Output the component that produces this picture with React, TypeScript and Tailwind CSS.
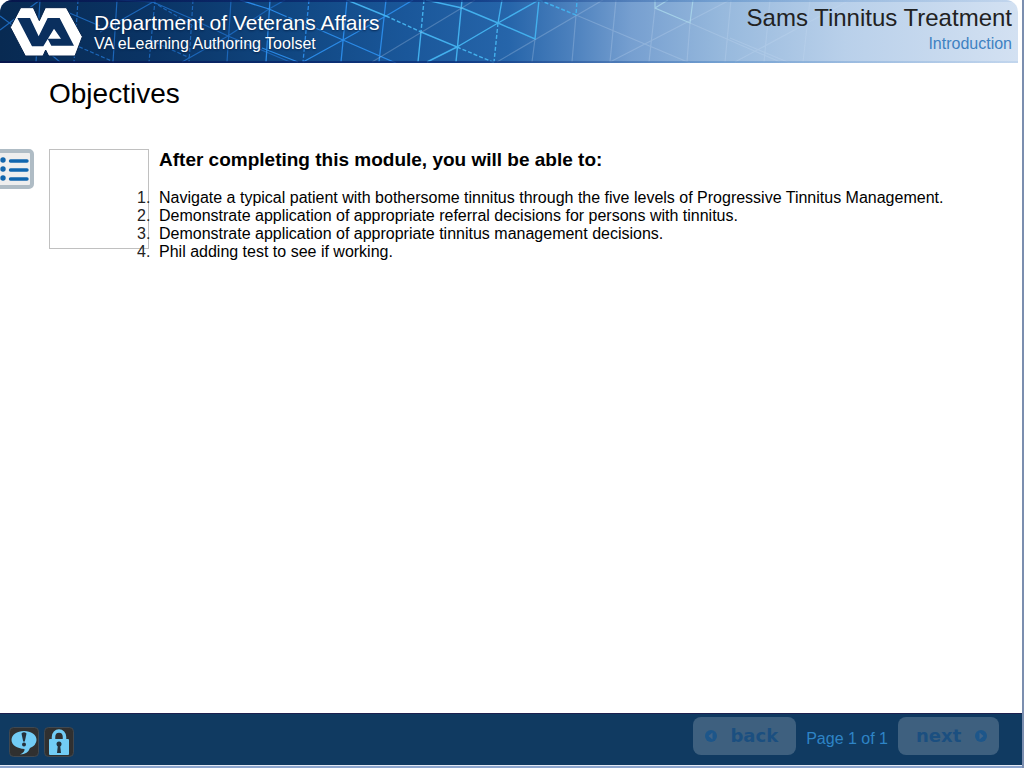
import React from "react";

function HeaderPattern() {
  return (
    <svg
      className="absolute inset-0 h-full w-full"
      viewBox="0 0 1018 63"
      preserveAspectRatio="none"
      fill="none"
      aria-hidden="true"
    >
      <defs>
        <linearGradient id="sky" x1="0" y1="0" x2="1" y2="0">
          <stop offset="0" stopColor="#082a52" />
          <stop offset="0.15" stopColor="#0a3465" />
          <stop offset="0.28" stopColor="#104680" />
          <stop offset="0.4" stopColor="#1a579a" />
          <stop offset="0.5" stopColor="#2665aa" />
          <stop offset="0.56" stopColor="#4b80bd" />
          <stop offset="0.62" stopColor="#769fd0" />
          <stop offset="0.71" stopColor="#97b9dd" />
          <stop offset="0.83" stopColor="#b9d0ea" />
          <stop offset="1" stopColor="#d3e1f2" />
        </linearGradient>
        <linearGradient id="edge" gradientUnits="userSpaceOnUse" x1="0" y1="0" x2="1018" y2="0">
          <stop offset="0" stopColor="#06114a" stopOpacity="0.8" />
          <stop offset="0.45" stopColor="#0a2c78" stopOpacity="0.7" />
          <stop offset="0.7" stopColor="#4f86c4" stopOpacity="0.5" />
          <stop offset="1" stopColor="#a9c5e6" stopOpacity="0.4" />
        </linearGradient>
      </defs>
      <rect width="1018" height="63" fill="url(#sky)" />
      <g stroke="#1c66b8" strokeWidth="1.2">
        <path d="M40 0L36 62M117 0L113 62M231 0L227 62M0 16L42 47L60 62M60 9L100 26M118 0L153 2L190 18L228 36L290 62M100 32L153 2M182 62L228 36L269 9L285 0M0 30L40 0" />
        <path d="M78 0L74 62M155 0L149 62M193 0L189 62M68 42L114 62M150 40L190 58M153 2L200 30" strokeDasharray="4 2" />
      </g>
      <g stroke="#2b8ae6" strokeWidth="1.3">
        <path d="M270 0L266 62M347 0L341 62M386 0L379 62M240 0L269 9L285 16M320 30L343 40L396 63M303 62L343 40L386 16L413 0M262 48L298 62" />
        <path d="M309 0L303 62M320 30L285 16" strokeDasharray="4 2" />
      </g>
      <g stroke="#43b0ed" strokeWidth="1.4">
        <path d="M347 0L386 16M421 32L418 62M462 0L456 62M421 32L457 47L498 23L539 0M427 62L457 47M426 0L462 8L498 23L535 39L539 0M502 0L498 23" />
        <path d="M424 0L421 32M386 16L421 32M457 47L495 63M498 23L494 62M539 0L576 15L577 0" strokeDasharray="4 2" />
      </g>
      <g stroke="#b0e0ef" strokeWidth="1.2" opacity="0.7">
        <path d="M655 0L655 8L690 23L693 0M655 8L668 0" />
      </g>
      <g stroke="#c8def2" strokeWidth="1.2" opacity="0.26">
        <path d="M372 62L475 0M497 62L603 0M610 62L730 0M535 39L532 62M616 0L610 62M655 8L649 62M576 15L690 63M731 0L725 62M770 0L764 62M810 0L803 62M730 38L790 63M690 23L780 62M735 62L850 0M576 15L572 62M690 23L687 62" />
      </g>
      <rect width="1018" height="2" fill="url(#edge)" />
      <rect y="61" width="1018" height="2" fill="url(#edge)" />
    </svg>
  );
}

function Logo() {
  return (
    <svg className="h-14 w-[78px] shrink-0" viewBox="0 0 234 168" role="img" aria-label="VA logo">
      <path
        fill="#fff"
        stroke="#06244c"
        strokeWidth="3"
        d="M38 11H76L94 50L112 11H175L223 98L201 156H122L113 138L105 156H52L7 70Z"
      />
      <path
        fill="#0a2f5e"
        d="M28 42H66L92 97L119 42H155L198 125H130L119 104H159L138 74L106 127H72Z"
      />
    </svg>
  );
}

function Arrow({ flip = false }: { flip?: boolean }) {
  return (
    <svg className={flip ? "size-3 rotate-180" : "size-3"} viewBox="0 0 12 12" aria-hidden="true">
      <circle cx="6" cy="6" r="6" fill="#1d568a" />
      <path d="M7.500 2.500V9.500L3.500 6Z" fill="#416488" />
    </svg>
  );
}

const objectives = [
  "Navigate a typical patient with bothersome tinnitus through the five levels of Progressive Tinnitus Management.",
  "Demonstrate application of appropriate referral decisions for persons with tinnitus.",
  "Demonstrate application of appropriate tinnitus management decisions.",
  "Phil adding test to see if working.",
];

export default function App() {
  return (
    <div className="flex min-h-screen flex-col border-r-2 border-[#7b8eaf] bg-white font-['Liberation_Sans',Arial,sans-serif] text-black">
      <header className="relative mr-1 flex h-[63px] items-start justify-between overflow-hidden rounded-t-xl">
        <HeaderPattern />
        <div className="relative flex items-start gap-2 pt-1 pl-2">
          <Logo />
          <div className="pt-[7px] text-white [text-shadow:0_1px_2px_#06244c]">
            <div className="text-[21px] leading-6">Department of Veterans Affairs</div>
            <div className="text-base leading-[18px]">VA eLearning Authoring Toolset</div>
          </div>
        </div>
        <div className="relative pt-1 pr-[6px] text-right">
          <h1 className="text-2xl leading-7 text-[#222]">Sams Tinnitus Treatment</h1>
          <div className="pt-0.5 text-base leading-5 text-[#3f82c2]">Introduction</div>
        </div>
      </header>

      <main className="flex-1">
        <h2 className="pt-[15px] pl-[49px] text-[28px] leading-8">Objectives</h2>
        <div className="flex items-start pt-[39px]">
          <button type="button" aria-label="Table of contents" className="mr-[15px] h-10 w-[34px] shrink-0">
            <svg className="h-10 w-[34px]" viewBox="0 0 34 40" aria-hidden="true">
              <rect x="-6" y="2" width="38" height="36" rx="3" fill="#eee" stroke="#afbcc5" strokeWidth="4" />
              <g fill="#1166ae">
                <circle cx="3" cy="11" r="2.7" />
                <circle cx="3" cy="20" r="2.7" />
                <circle cx="3" cy="29" r="2.7" />
              </g>
              <path d="M10.500 12H27M10.500 21H27M10.500 30H27" stroke="#1166ae" strokeWidth="3.400" strokeLinecap="round" />
            </svg>
          </button>
          <div className="h-[100px] w-[100px] shrink-0 border border-[#c0c0c0]" />
          <section className="min-w-0 pl-2.5">
            <h3 className="text-[19px] leading-[22px] font-bold">After completing this module, you will be able to:</h3>
            <ol className="-ml-[22px] list-none pt-[18px] text-base leading-[18px]">
              {objectives.map((text, i) => (
                <li key={text} className="flex">
                  <span className="w-[22px] shrink-0 text-[#222]">{i + 1}.</span>
                  <span>{text}</span>
                </li>
              ))}
            </ol>
          </section>
        </div>
      </main>

      <footer className="flex h-[55px] items-start justify-between border-t border-b-2 border-t-[#1c204f] border-b-[#8ba3cb] bg-[#103a61] pr-[23px] pl-[9px] shadow-[inset_0_-1px_0_#e4eaf5]">
        <div className="flex gap-[5px] pt-[13px]">
          <button type="button" aria-label="Feedback">
            <svg className="size-[30px]" viewBox="0 0 30 30" aria-hidden="true">
              <rect x="0.500" y="0.500" width="29" height="29" rx="4" fill="#303030" stroke="#404850" />
              <path d="M15 4C8 4 2.500 7.500 2.500 13C2.500 18 8 21.500 15.500 22Q16 25 11 27.500Q19 27 21 21Q27.500 18 27.500 13C27.500 7.500 22 4 15 4Z" fill="#72ccf5" />
              <path d="M12.500 6.500Q15 4 17.500 6.500L15.800 14.500H14.200Z" fill="#26303a" />
              <circle cx="15" cy="17.500" r="2" fill="#26303a" />
            </svg>
          </button>
          <button type="button" aria-label="Lock">
            <svg className="size-[30px]" viewBox="0 0 30 30" aria-hidden="true">
              <rect x="0.500" y="0.500" width="29" height="29" rx="4" fill="#303030" stroke="#404850" />
              <path d="M9.500 14V10A5.500 6 0 0 1 20.500 10V14" fill="none" stroke="#72ccf5" strokeWidth="3.500" />
              <rect x="5" y="12" width="20" height="16" rx="1" fill="#72ccf5" />
              <circle cx="15" cy="17" r="2.500" fill="#26303a" />
              <path d="M14 17H16L17 26H13Z" fill="#26303a" />
            </svg>
          </button>
        </div>
        <nav aria-label="Pages" className="flex items-start pt-[3px]">
          <button type="button" disabled className="flex h-[38px] w-[103px] items-center justify-between rounded-lg bg-[#3e607f] pr-[18px] pl-3 font-['DejaVu_Sans',Verdana,sans-serif] text-lg font-bold text-[#1b4f80]">
            <Arrow />
            back
          </button>
          <span className="px-2.5 pt-3 text-base leading-5 text-[#2e84c6]">Page 1 of 1</span>
          <button type="button" disabled className="flex h-[38px] w-[101px] items-center justify-between rounded-lg bg-[#3e607f] pr-3 pl-[18px] font-['DejaVu_Sans',Verdana,sans-serif] text-lg font-bold text-[#1b4f80]">
            next
            <Arrow flip />
          </button>
        </nav>
      </footer>
    </div>
  );
}
